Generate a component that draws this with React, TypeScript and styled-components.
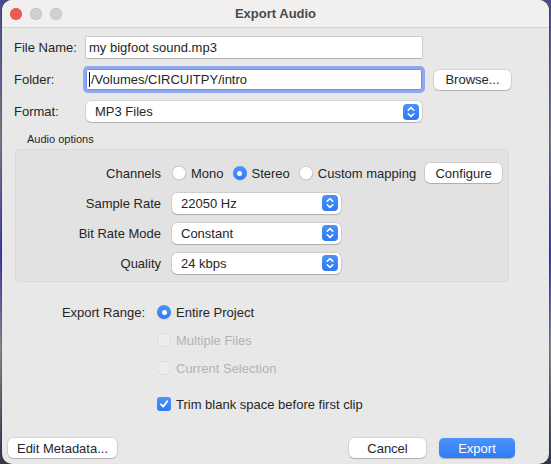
import React from "react";
import styled, { createGlobalStyle } from "styled-components";

const Global = createGlobalStyle`
  html, body { margin: 0; padding: 0; }
  body {
    width: 551px; height: 464px; overflow: hidden;
    background: linear-gradient(180deg, #4b4b8c 0%, #7a7a86 30%, #3c3ca0 55%, #8a8a90 75%, #33334a 100%);
    font-family: "Liberation Sans", "Noto Sans", sans-serif;
    font-size: 13px;
    color: #262626;
  }
  * { box-sizing: border-box; }
`;

const Window = styled.div`
  margin: 0 2px;
  height: 464px;
  border-radius: 10px;
  overflow: hidden;
  background: #e8e8e8;
  display: flex;
  flex-direction: column;
  box-shadow: 0 0 0 0.5px rgba(0,0,0,0.35);
`;

const TitleBar = styled.div`
  height: 28px;
  flex: none;
  background: #f1f0ef;
  border-bottom: 1px solid #d4d4d4;
  display: grid;
  grid-template-columns: 1fr auto 1fr;
  align-items: center;
  padding: 0 8px;
`;

const Lights = styled.div`
  display: flex;
  gap: 8px;
`;

const Light = styled.span<{ $c: string }>`
  width: 12px; height: 12px; border-radius: 50%;
  background: ${p => p.$c};
  box-shadow: inset 0 0 0 0.5px rgba(0,0,0,0.12);
`;

const Title = styled.div`
  font-weight: bold;
  font-size: 13px;
  color: #4b4b4b;
`;

const Body = styled.div`
  flex: 1;
  display: flex;
  flex-direction: column;
  padding: 9px 0 6px 12px;
`;

const TopForm = styled.div`
  display: grid;
  grid-template-columns: 72px 336px auto;
  grid-auto-rows: 21px;
  row-gap: 11px;
  align-items: center;
`;

const Label = styled.div`
  white-space: nowrap;
`;

const TextInput = styled.div<{ $focus?: boolean }>`
  height: 21px;
  background: #fff;
  display: flex;
  align-items: center;
  padding: 0 3px;
  box-shadow: ${p => p.$focus
    ? "0 0 0 3px #8fa9ef, inset 0 0 0 1px #6f8fe6"
    : "0 0 0 0.5px rgba(0,0,0,0.22), 0 0.5px 1px rgba(0,0,0,0.15)"};
  border-radius: ${p => (p.$focus ? "2px" : "0")};
`;

const Caret = styled.span`
  display: inline-block;
  width: 1px;
  height: 15px;
  background: #111;
  margin-right: 1px;
`;

const Button = styled.div<{ $primary?: boolean; $w: number }>`
  width: ${p => p.$w}px;
  height: 20px;
  border-radius: 5px;
  display: flex;
  align-items: center;
  justify-content: center;
  white-space: nowrap;
  background: ${p => (p.$primary ? "linear-gradient(180deg, #4b94fa 0%, #2f7bf5 100%)" : "#fff")};
  color: ${p => (p.$primary ? "#fff" : "#262626")};
  box-shadow: ${p => p.$primary
    ? "0 0.5px 1px rgba(0,0,0,0.25)"
    : "0 0 0 0.5px rgba(0,0,0,0.18), 0 1px 1px rgba(0,0,0,0.16)"};
`;

const BrowseButton = styled(Button)`
  margin-left: 12px;
`;

const SelectBox = styled.div<{ $w?: number }>`
  width: ${p => (p.$w ? `${p.$w}px` : "100%")};
  height: 21px;
  background: #fff;
  border-radius: 5px;
  display: flex;
  align-items: center;
  justify-content: space-between;
  padding: 0 3px 0 9px;
  box-shadow: 0 0 0 0.5px rgba(0,0,0,0.18), 0 1px 1px rgba(0,0,0,0.16);
`;

const Stepper = styled.span`
  width: 16px; height: 16px;
  border-radius: 4px;
  background: linear-gradient(180deg, #4a92fa, #2e79f4);
  display: flex;
  align-items: center;
  justify-content: center;
`;

const Select = ({ value, w }: { value: string; w?: number }) => (
  <SelectBox $w={w}>
    <span>{value}</span>
    <Stepper>
      <svg width="8" height="12" viewBox="0 0 8 12" fill="none" stroke="#fff" strokeWidth="1.5" strokeLinecap="round" strokeLinejoin="round">
        <path d="M1.2 4.3 L4 1.6 L6.8 4.3" />
        <path d="M1.2 7.7 L4 10.4 L6.8 7.7" />
      </svg>
    </Stepper>
  </SelectBox>
);

const GroupTitle = styled.div`
  font-size: 11px;
  margin: 11px 0 4px 13px;
  color: #262626;
`;

const Group = styled.div`
  width: 494px;
  margin-left: 1px;
  background: #e2e2e2;
  border: 1px solid #d9d9d9;
  border-radius: 5px;
  padding: 13px 0 8px 0;
  display: grid;
  grid-template-columns: 145px auto;
  column-gap: 11px;
  grid-auto-rows: 20px;
  row-gap: 10px;
  align-items: center;
`;

const RightLabel = styled.div`
  text-align: right;
  white-space: nowrap;
`;

const RadioRow = styled.div`
  display: flex;
  align-items: center;
`;

const RadioItem = styled.label<{ $disabled?: boolean }>`
  display: flex;
  align-items: center;
  gap: 5px;
  margin-right: 9px;
  color: ${p => (p.$disabled ? "#b3b3b3" : "#262626")};
  white-space: nowrap;
`;

const RadioDot = styled.span<{ $on?: boolean; $disabled?: boolean }>`
  width: 14px; height: 14px; border-radius: 50%;
  flex: none;
  background: ${p => (p.$on ? "linear-gradient(180deg, #4b94fa, #2f7bf5)" : p.$disabled ? "#ececec" : "#fff")};
  box-shadow: ${p => (p.$on ? "0 0.5px 1px rgba(0,0,0,0.2)" : p.$disabled ? "inset 0 0 0 0.5px rgba(0,0,0,0.1)" : "inset 0 0 0 0.5px rgba(0,0,0,0.28), 0 0.5px 1px rgba(0,0,0,0.12)")};
  display: flex;
  align-items: center;
  justify-content: center;
  &::after {
    content: "";
    display: ${p => (p.$on ? "block" : "none")};
    width: 5px; height: 5px; border-radius: 50%;
    background: #fff;
  }
`;

const Radio = ({ label, on, disabled }: { label: string; on?: boolean; disabled?: boolean }) => (
  <RadioItem $disabled={disabled}>
    <RadioDot $on={on} $disabled={disabled} />
    {label}
  </RadioItem>
);

const RangeForm = styled.div`
  margin-top: 20px;
  display: grid;
  grid-template-columns: 131px auto;
  column-gap: 12px;
  grid-auto-rows: 20px;
  row-gap: 8px;
  align-items: center;
`;

const CheckRow = styled.label`
  grid-column: 2;
  margin-top: 16px;
  display: flex;
  align-items: center;
  gap: 5px;
  white-space: nowrap;
`;

const CheckBox = styled.span`
  width: 14px; height: 14px;
  border-radius: 3px;
  background: linear-gradient(180deg, #4b94fa, #2f7bf5);
  display: flex; align-items: center; justify-content: center;
`;

const Footer = styled.div`
  margin-top: auto;
  margin-left: -6px;
  padding-right: 34px;
  display: flex;
  align-items: center;
  gap: 13px;
`;

const Spacer = styled.div`
  flex: 1;
`;

export default function App() {
  return (
    <>
      <Global />
      <Window>
        <TitleBar>
          <Lights>
            <Light $c="#ee5a52" />
            <Light $c="#d0d0d0" />
            <Light $c="#d0d0d0" />
          </Lights>
          <Title>Export Audio</Title>
          <div />
        </TitleBar>
        <Body>
          <TopForm>
            <Label>File Name:</Label>
            <TextInput>my bigfoot sound.mp3</TextInput>
            <div />
            <Label>Folder:</Label>
            <TextInput $focus><Caret />/Volumes/CIRCUITPY/intro</TextInput>
            <BrowseButton $w={77}>Browse...</BrowseButton>
            <Label>Format:</Label>
            <Select value="MP3 Files" />
            <div />
          </TopForm>

          <GroupTitle>Audio options</GroupTitle>
          <Group>
            <RightLabel>Channels</RightLabel>
            <RadioRow>
              <Radio label="Mono" />
              <Radio label="Stereo" on />
              <Radio label="Custom mapping" />
              <Button $w={77}>Configure</Button>
            </RadioRow>
            <RightLabel>Sample Rate</RightLabel>
            <Select value="22050 Hz" w={169} />
            <RightLabel>Bit Rate Mode</RightLabel>
            <Select value="Constant" w={169} />
            <RightLabel>Quality</RightLabel>
            <Select value="24 kbps" w={169} />
          </Group>

          <RangeForm>
            <RightLabel>Export Range:</RightLabel>
            <Radio label="Entire Project" on />
            <div />
            <Radio label="Multiple Files" disabled />
            <div />
            <Radio label="Current Selection" disabled />
            <CheckRow>
              <CheckBox>
                <svg width="10" height="10" viewBox="0 0 10 10" fill="none" stroke="#fff" strokeWidth="1.8" strokeLinecap="round" strokeLinejoin="round">
                  <path d="M2 5.3 L4.2 7.6 L8.2 2.2" />
                </svg>
              </CheckBox>
              Trim blank space before first clip
            </CheckRow>
          </RangeForm>

          <Footer>
            <Button $w={109}>Edit Metadata...</Button>
            <Spacer />
            <Button $w={77}>Cancel</Button>
            <Button $w={76} $primary>Export</Button>
          </Footer>
        </Body>
      </Window>
    </>
  );
}
